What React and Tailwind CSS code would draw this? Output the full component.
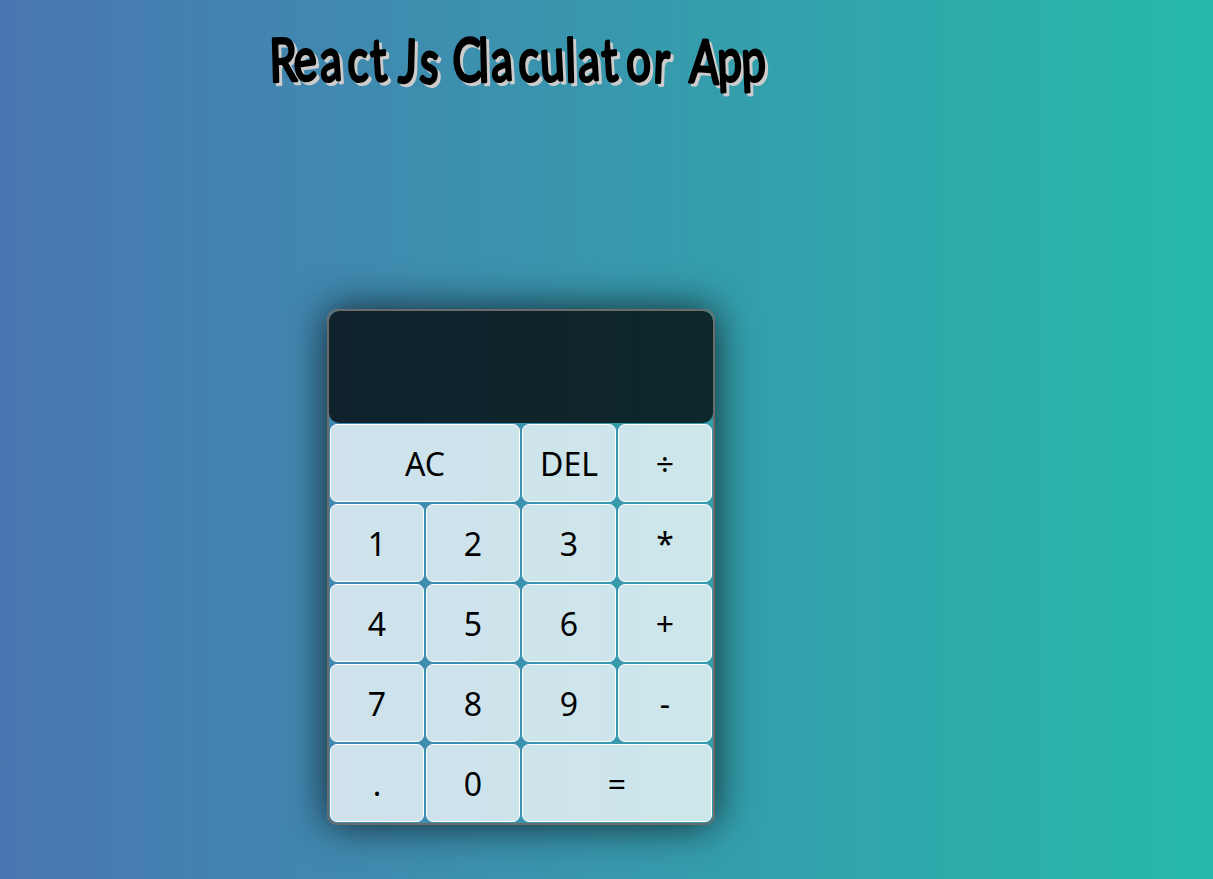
const keys = [
  { label: "AC", wide: true },
  { label: "DEL" },
  { label: "÷" },
  { label: "1" },
  { label: "2" },
  { label: "3" },
  { label: "*" },
  { label: "4" },
  { label: "5" },
  { label: "6" },
  { label: "+" },
  { label: "7" },
  { label: "8" },
  { label: "9" },
  { label: "-" },
  { label: "." },
  { label: "0" },
  { label: "=", wide: true },
];

// Hand-lettered spacing: left edge of every glyph, and its tilt in degrees.
const squeeze = 0.73;
const glyphLefts = [
  270, 295, 321, 348, 372, 398, 419, 440, 453, 479, 492, 519, 541, 566, 579,
  603, 627, 653, 675, 689, 718, 742,
];
const glyphX = glyphLefts.map((x) => (x / squeeze).toFixed(1)).join(" ");
const glyphTilt = "-2 -6 -5 -3 -5 2 4 0 -2 -2 -5 -3 -4 -2 -5 -5 -4 3 0 3 -3 -3";

function Title() {
  return (
    <h1 className="h-[309px]">
      <svg width="1042" height="140" className="drop-shadow-[3px_3px_0_#ccc]">
        <text
          x={glyphX}
          y="82"
          rotate={glyphTilt}
          transform={`scale(${squeeze} 1)`}
          xmlSpace="preserve"
          strokeWidth="3"
          strokeLinejoin="round"
          className="fill-black stroke-black font-['Lato',sans-serif] text-[60px] font-normal"
        >
          ReactJs Claculator App
        </text>
      </svg>
    </h1>
  );
}

function Key({ label, wide }) {
  return (
    <button
      className={`m-px rounded-[7px] border border-white bg-white/75 pt-0.5 text-[32px] text-black ${wide ? "col-span-2" : ""}`}
    >
      {label}
    </button>
  );
}

export default function App() {
  return (
    <main className="h-[879px] overflow-hidden bg-linear-to-r/srgb from-[#4a76b2] to-[#26b9a9] font-['Noto_Sans',sans-serif]">
      <Title />
      <section className="ml-[327px] w-[388px] rounded-[10px] border-2 border-[#6b6b6b] shadow-[0_0_40px_rgba(0,0,0,0.75)]">
        <div className="h-28 rounded-[10px] bg-black/75" />
        <div className="grid auto-rows-[80px] grid-cols-4">
          {keys.map((key) => (
            <Key key={key.label} {...key} />
          ))}
        </div>
      </section>
    </main>
  );
}
